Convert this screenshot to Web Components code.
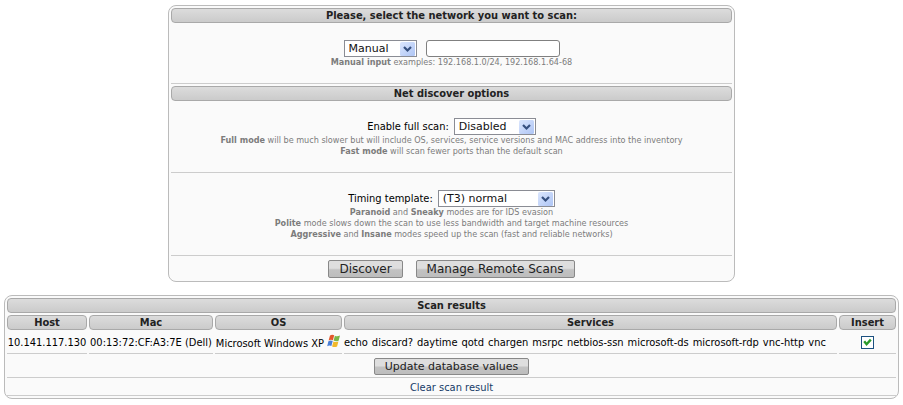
<!DOCTYPE html>
<html lang="en">
<head>
<meta charset="utf-8">
<title>Network scan</title>
<style>
body{margin:0;padding:5px 4px;background:#fff;color:#000;font:11px/14px "DejaVu Sans Condensed","DejaVu Sans",sans-serif}
main{display:grid;gap:13px}
.setup{width:100%;max-width:567px;justify-self:center}
</style>
</head>
<body>
<main>
  <net-panel class="setup">
    <title-bar>Please, select the network you want to scan:</title-bar>
    <form-row>
      <network-input></network-input>
      <hint-text><b>Manual input</b> examples: 192.168.1.0/24, 192.168.1.64-68</hint-text>
    </form-row>
    <title-bar>Net discover options</title-bar>
    <form-row>
      <select-field label="Enable full scan:" options="Disabled|Fast mode|Full mode" box-width="82"></select-field>
      <hint-text><b>Full mode</b> will be much slower but will include OS, services, service versions and MAC address into the inventory<br><b>Fast mode</b> will scan fewer ports than the default scan</hint-text>
    </form-row>
    <form-row>
      <select-field label="Timing template:" options="(T3) normal|(T0) paranoid|(T1) sneaky|(T2) polite|(T4) aggressive|(T5) insane" box-width="117"></select-field>
      <hint-text><b>Paranoid</b> and <b>Sneaky</b> modes are for IDS evasion<br><b>Polite</b> mode slows down the scan to use less bandwidth and target machine resources<br><b>Aggressive</b> and <b>Insane</b> modes speed up the scan (fast and reliable networks)</hint-text>
    </form-row>
    <button-row>
      <push-button>Discover</push-button>
      <push-button>Manage Remote Scans</push-button>
    </button-row>
  </net-panel>
  <net-panel>
    <scan-results></scan-results>
  </net-panel>
</main>

<script>
const BAR = `box-sizing:border-box;height:15px;border:1px solid #a9a9a9;border-radius:4px;
  background:linear-gradient(#dcdcdc,#cbcbcb);color:#222;font-weight:bold;line-height:13px;text-align:center`;

function define(name, html, setup) {
  customElements.define(name, class extends HTMLElement {
    connectedCallback() {
      if (this.shadowRoot) return;
      const root = this.attachShadow({ mode: 'open' });
      root.innerHTML = html;
      if (setup) setup.call(this, root);
    }
  });
}

define('net-panel', `<style>
  :host{display:grid;grid-template-columns:minmax(0,1fr);gap:2px;padding:2px;box-sizing:border-box;border:1px solid #bbb;border-radius:8px;background:#fafafa}
</style><slot></slot>`);

define('title-bar', `<style>:host{display:block;${BAR}}</style><slot></slot>`);

define('form-row', `<style>
  :host{display:flex;flex-direction:column;align-items:center;padding:15px 0;border-bottom:1px solid #ccc}
</style><slot></slot>`);

define('hint-text', `<style>
  :host{display:block;color:#7c7c7c;font-size:9px;line-height:11px;text-align:center}
</style><slot></slot>`);

define('button-row', `<style>
  :host{display:flex;justify-content:center;gap:13px;padding:2px 0 1px}
</style><slot></slot>`);

define('push-button', `<style>
  :host{display:inline-block}
  button{display:block;height:18px;margin:0;padding:0 10px;border:1px solid #888;border-radius:2px;color:#222;
    background:linear-gradient(#dedede 0 45%,#c2c2c2 55%,#bdbdbd);font:12px/16px "DejaVu Sans",sans-serif;white-space:nowrap}
  :host([compact]) button{height:17px;font-size:11px;line-height:15px}
</style><button type="button"><slot></slot></button>`);

define('drop-down', `<style>
  :host{display:inline-grid}
  select,svg{grid-area:1/1}
  select{appearance:none;height:17px;margin:0;padding:0 20px 0 4px;border:1px solid #8a8c94;border-radius:0;
    background:#fff;color:#111;font:11px/15px "DejaVu Sans",sans-serif}
  svg{justify-self:end;align-self:center;margin-right:2px;pointer-events:none}
</style>
<select></select>
<svg width="15" height="14" viewBox="0 0 15 14">
  <defs><linearGradient id="g" x1="0" y1="0" x2="1" y2="1"><stop offset="0" stop-color="#dbe6fd"/><stop offset="1" stop-color="#aec5f5"/></linearGradient></defs>
  <rect width="15" height="14" rx="1.5" fill="url(#g)"/>
  <path d="M4 5l3.5 3.5L11 5" fill="none" stroke="#36507f" stroke-width="2.2"/>
</svg>`, function (root) {
  const select = root.querySelector('select');
  for (const name of this.getAttribute('options').split('|')) select.add(new Option(name));
  select.style.width = this.getAttribute('box-width') + 'px';
  select.setAttribute('aria-label', this.getAttribute('label'));
});

define('select-field', `<style>
  :host{display:flex;align-items:center;gap:5px}
  label{line-height:17px;cursor:default}
</style><label></label>`, function (root) {
  const label = root.querySelector('label');
  label.textContent = this.getAttribute('label');
  const box = document.createElement('drop-down');
  for (const name of ['label', 'options', 'box-width']) box.setAttribute(name, this.getAttribute(name));
  root.append(box);
  label.addEventListener('click', () => box.shadowRoot.querySelector('select').focus());
});

define('network-input', `<style>
  :host{display:flex;gap:9px}
  input{box-sizing:border-box;width:134px;height:17px;margin:0;padding:0 4px;border:1px solid #808080;border-radius:3px;background:#fff;font:11px "DejaVu Sans",sans-serif}
</style>
<drop-down label="Network" options="Manual" box-width="73"></drop-down>
<input type="text" aria-label="Network address">`);

define('windows-flag', `<style>:host{display:inline-block;vertical-align:-1px}svg{display:block}</style>
<svg width="14" height="14" viewBox="0 0 14 14" aria-hidden="true">
  <path d="M3 1.6Q5 .1 7.2 1.3L5.9 6.2Q3.8 5.2 1.6 6.5Z" fill="#e2582c"/>
  <path d="M7.9 1.7Q10 2.9 13 1.5L11.6 6.7Q9 7.9 6.6 6.6Z" fill="#7ab648"/>
  <path d="M1.4 7.3Q3.6 6 5.7 7.1L4.4 12Q2.3 11 .2 12.3Z" fill="#4a7fd6"/>
  <path d="M6.4 7.5Q8.8 8.7 11.4 7.5L10.1 12.4Q7.5 13.7 5.1 12.4Z" fill="#f2b92c"/>
</svg>`);

define('scan-results', `<style>
  :host{display:block;margin:-2px}
  table{width:100%;border-collapse:separate;border-spacing:2px}
  th{${BAR};padding:0}
  td{box-sizing:border-box;height:22px;padding:0;border-bottom:1px solid #ccc;text-align:center;white-space:nowrap;vertical-align:middle}
  tfoot tr:last-child td{height:16px}
  ul{display:flex;gap:4px;margin:0;padding:0;list-style:none}
  push-button{vertical-align:middle}
  a{color:#163a68;text-decoration:none}
  input{appearance:none;display:block;width:13px;height:13px;margin:0 auto;border:1px solid #1c5180;background:#fff}
  label{display:grid;justify-content:center;align-items:center}
  label>*{grid-area:1/1}
  label svg{pointer-events:none;visibility:hidden;z-index:1}
  input:checked+svg{visibility:visible}
</style>
<table>
  <colgroup><col style="width:80px"><col style="width:124px"><col style="width:127px"><col><col style="width:57px"></colgroup>
  <thead>
    <tr><th colspan="5">Scan results</th></tr>
    <tr><th>Host</th><th>Mac</th><th>OS</th><th>Services</th><th>Insert</th></tr>
  </thead>
  <tbody>
    <tr>
      <td>10.141.117.130</td>
      <td>00:13:72:CF:A3:7E (Dell)</td>
      <td>Microsoft Windows XP <windows-flag></windows-flag></td>
      <td><ul><li>echo</li> <li>discard?</li> <li>daytime</li> <li>qotd</li> <li>chargen</li> <li>msrpc</li> <li>netbios-ssn</li> <li>microsoft-ds</li> <li>microsoft-rdp</li> <li>vnc-http</li> <li>vnc</li></ul></td>
      <td><label><input type="checkbox" checked aria-label="Insert host 10.141.117.130"><svg width="13" height="13" viewBox="0 0 13 13"><path d="M3.2 5.2l2.4 3L9.8 3.6" fill="none" stroke="#2a9a2a" stroke-width="2.4"/></svg></label></td>
    </tr>
  </tbody>
  <tfoot>
    <tr><td colspan="5"><push-button compact>Update database values</push-button></td></tr>
    <tr><td colspan="5"><a href="#clear">Clear scan result</a></td></tr>
  </tfoot>
</table>`);
</script>
</body>
</html>
